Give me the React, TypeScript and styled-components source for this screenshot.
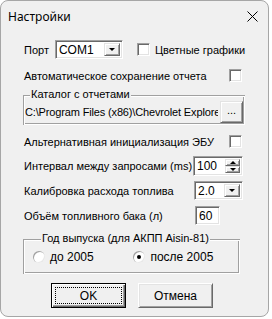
import styled, { createGlobalStyle } from "styled-components";

const GlobalStyle = createGlobalStyle`
  html, body {
    margin: 0;
    padding: 0;
    background: #ffffff;
  }
  body {
    font-family: "Liberation Sans", Arial, sans-serif;
    font-size: 11px;
    color: #000;
  }
`;

const FONT = '"Liberation Sans", Arial, sans-serif';

const Window = styled.div`
  width: 269px;
  height: 317px;
  box-sizing: border-box;
  border: 1px solid #a6a6a6;
  border-radius: 8px;
  background: #f0f0f0;
  overflow: hidden;
  display: flex;
  flex-direction: column;
`;

const TitleBar = styled.div`
  height: 30px;
  flex: none;
  display: flex;
  align-items: center;
  justify-content: space-between;
  padding: 0 10px 0 7px;
  box-sizing: border-box;
  font-family: "Noto Sans", "Liberation Sans", sans-serif;
  font-size: 12px;
`;

const Content = styled.div`
  display: flex;
  flex-direction: column;
  padding: 9px 23px 0 21px;
`;

const Row = styled.div<{ $top: number; $h: number; $right?: number }>`
  display: flex;
  align-items: center;
  justify-content: space-between;
  margin-top: ${(p) => p.$top}px;
  height: ${(p) => p.$h}px;
  padding: 0 ${(p) => p.$right ?? 0}px 0 2px;
`;

const Label = styled.span`
  white-space: nowrap;
  font-family: ${FONT};
  font-size: 11px;
`;

const Group = styled.div`
  display: flex;
  align-items: center;
`;

const Sunken = styled.div<{ $w: number; $h: number }>`
  width: ${(p) => p.$w}px;
  height: ${(p) => p.$h}px;
  box-sizing: border-box;
  border: 1px solid;
  border-color: #a0a0a0 #ffffff #ffffff #a0a0a0;
  box-shadow: inset 1px 1px #696969, inset -1px -1px #e3e3e3;
  background: #fff;
  display: flex;
  align-items: center;
  padding: 2px;
  font-size: 12px;
`;

const FieldText = styled.span`
  flex: 1;
  padding-left: 1px;
  font-family: ${FONT};
  font-size: 12px;
`;

const Raised = styled.div<{ $w: number }>`
  width: ${(p) => p.$w}px;
  align-self: stretch;
  box-sizing: border-box;
  background: #f0f0f0;
  border: 1px solid;
  border-color: #e3e3e3 #696969 #696969 #e3e3e3;
  box-shadow: inset 1px 1px #ffffff, inset -1px -1px #a0a0a0;
  display: flex;
  align-items: center;
  justify-content: center;
  flex: none;
`;

const SpinBox = styled.div`
  display: flex;
  flex-direction: column;
  width: 15px;
  align-self: stretch;
`;

const SpinHalf = styled(Raised)`
  flex: 1;
  width: 15px;
`;

const Arrow = styled.span<{ $up?: boolean }>`
  width: 0;
  height: 0;
  border-left: 3px solid transparent;
  border-right: 3px solid transparent;
  ${(p) => (p.$up ? "border-bottom: 3px solid #000;" : "border-top: 3px solid #000;")}
`;

const CheckBox = styled.div`
  width: 13px;
  height: 13px;
  box-sizing: border-box;
  border: 1px solid;
  border-color: #a0a0a0 #ffffff #ffffff #a0a0a0;
  box-shadow: inset 1px 1px #696969, inset -1px -1px #e3e3e3;
  background: #fff;
  flex: none;
`;

const Frame = styled.fieldset<{ $top: number; $right: number; $pad: string }>`
  margin: ${(p) => p.$top}px ${(p) => p.$right}px 0 1px;
  padding: ${(p) => p.$pad};
  border: none;
  box-shadow: inset 1px 1px #a0a0a0, inset -1px -1px #ffffff, inset 2px 2px #ffffff, inset -2px -2px #a0a0a0;
  min-width: 0;
`;

const Legend = styled.legend<{ $indent: number }>`
  padding: 0 1px;
  margin-left: ${(p) => p.$indent}px;
  line-height: 13px;
  font-family: ${FONT};
  font-size: 11px;
  background: #f0f0f0;
`;

const PathRow = styled.div`
  display: flex;
  align-items: center;
  height: 22px;
`;

const PathText = styled.span`
  flex: 1;
  min-width: 0;
  overflow: hidden;
  white-space: nowrap;
  font-size: 11px;
  letter-spacing: -0.15px;
  margin-right: 2px;
`;

const SmallButton = styled(Raised)`
  height: 22px;
  font-size: 11px;
  padding-bottom: 4px;
`;

const RadioRow = styled.div`
  display: flex;
  align-items: center;
  height: 16px;
`;

const RadioItem = styled.label<{ $w: number }>`
  display: flex;
  align-items: center;
  gap: 5px;
  width: ${(p) => p.$w}px;
  font-family: ${FONT};
  font-size: 12px;
`;

const Radio = styled.span<{ $on?: boolean }>`
  width: 12px;
  height: 12px;
  box-sizing: border-box;
  border-radius: 50%;
  background: #fff;
  box-shadow: inset 1px 1px #a0a0a0, inset -1px -1px #e8e8e8;
  display: flex;
  align-items: center;
  justify-content: center;
  &::after {
    content: "";
    width: 4px;
    height: 4px;
    border-radius: 50%;
    background: ${(p) => (p.$on ? "#000" : "transparent")};
  }
`;

const Buttons = styled.div`
  display: flex;
  gap: 12px;
  padding-left: 29px;
  margin-top: 9px;
`;

const Button = styled.button<{ $default?: boolean }>`
  width: 75px;
  height: 25px;
  box-sizing: border-box;
  background: #f0f0f0;
  border: 1px solid ${(p) => (p.$default ? "#000" : "#ffffff")};
  border-right-color: ${(p) => (p.$default ? "#000" : "#696969")};
  border-bottom-color: ${(p) => (p.$default ? "#000" : "#696969")};
  box-shadow: ${(p) =>
    p.$default
      ? "inset 1px 1px #ffffff, inset -1px -1px #696969, inset -2px -2px #a0a0a0"
      : "inset 1px 1px #e3e3e3, inset -1px -1px #a0a0a0"};
  font-family: ${FONT};
  font-size: 12px;
  color: #000;
  padding: 0;
  position: relative;
  ${(p) =>
    p.$default
      ? `&::after { content: ""; position: absolute; inset: 3px; border: 1px dotted #000; }`
      : ""}
`;

export default function App() {
  return (
    <>
      <GlobalStyle />
      <Window>
        <TitleBar>
          <span>Настройки</span>
          <svg width="11" height="11" viewBox="0 0 11 11">
            <path d="M0.5 0.5 L10.5 10.5 M10.5 0.5 L0.5 10.5" stroke="#000" strokeWidth="1" />
          </svg>
        </TitleBar>
        <Content>
          <Row $top={0} $h={19}>
            <Group>
              <Label>Порт</Label>
              <Sunken $w={68} $h={19} style={{ marginLeft: 6 }}>
                <FieldText>COM1</FieldText>
                <Raised $w={16}>
                  <Arrow />
                </Raised>
              </Sunken>
              <CheckBox style={{ marginLeft: 14 }} />
              <Label style={{ marginLeft: 5 }}>Цветные графики</Label>
            </Group>
          </Row>
          <Row $top={9} $h={15} $right={3}>
            <Label>Автоматическое сохранение отчета</Label>
            <CheckBox />
          </Row>
          <Frame $top={5} $right={0} $pad="0 2px 2px 2px">
            <Legend $indent={5}>Каталог с отчетами</Legend>
            <PathRow>
              <PathText>C:\Program Files (x86)\Chevrolet Explore</PathText>
              <SmallButton $w={23}>...</SmallButton>
            </PathRow>
          </Frame>
          <Row $top={9} $h={15} $right={3}>
            <Label>Альтернативная инициализация ЭБУ</Label>
            <CheckBox />
          </Row>
          <Row $top={7} $h={20} $right={2}>
            <Label>Интервал между запросами (ms)</Label>
            <Sunken $w={50} $h={20}>
              <FieldText>100</FieldText>
              <SpinBox>
                <SpinHalf $w={15}>
                  <Arrow $up />
                </SpinHalf>
                <SpinHalf $w={15}>
                  <Arrow />
                </SpinHalf>
              </SpinBox>
            </Sunken>
          </Row>
          <Row $top={5} $h={19} $right={2}>
            <Label>Калибровка расхода топлива</Label>
            <Sunken $w={49} $h={19}>
              <FieldText>2.0</FieldText>
              <Raised $w={16}>
                <Arrow />
              </Raised>
            </Sunken>
          </Row>
          <Row $top={6} $h={19} $right={0}>
            <Label>Объём топливного бака (л)</Label>
            <Sunken $w={25} $h={19} style={{ marginRight: 25 }}>
              <FieldText>60</FieldText>
            </Sunken>
          </Row>
          <Frame $top={7} $right={5} $pad="4px 10px 9px 10px">
            <Legend $indent={8}>Год выпуска (для АКПП Aisin-81)</Legend>
            <RadioRow>
              <RadioItem $w={104}>
                <Radio />
                до 2005
              </RadioItem>
              <RadioItem $w={100}>
                <Radio $on />
                после 2005
              </RadioItem>
            </RadioRow>
          </Frame>
          <Buttons>
            <Button $default>OK</Button>
            <Button>Отмена</Button>
          </Buttons>
        </Content>
      </Window>
    </>
  );
}
